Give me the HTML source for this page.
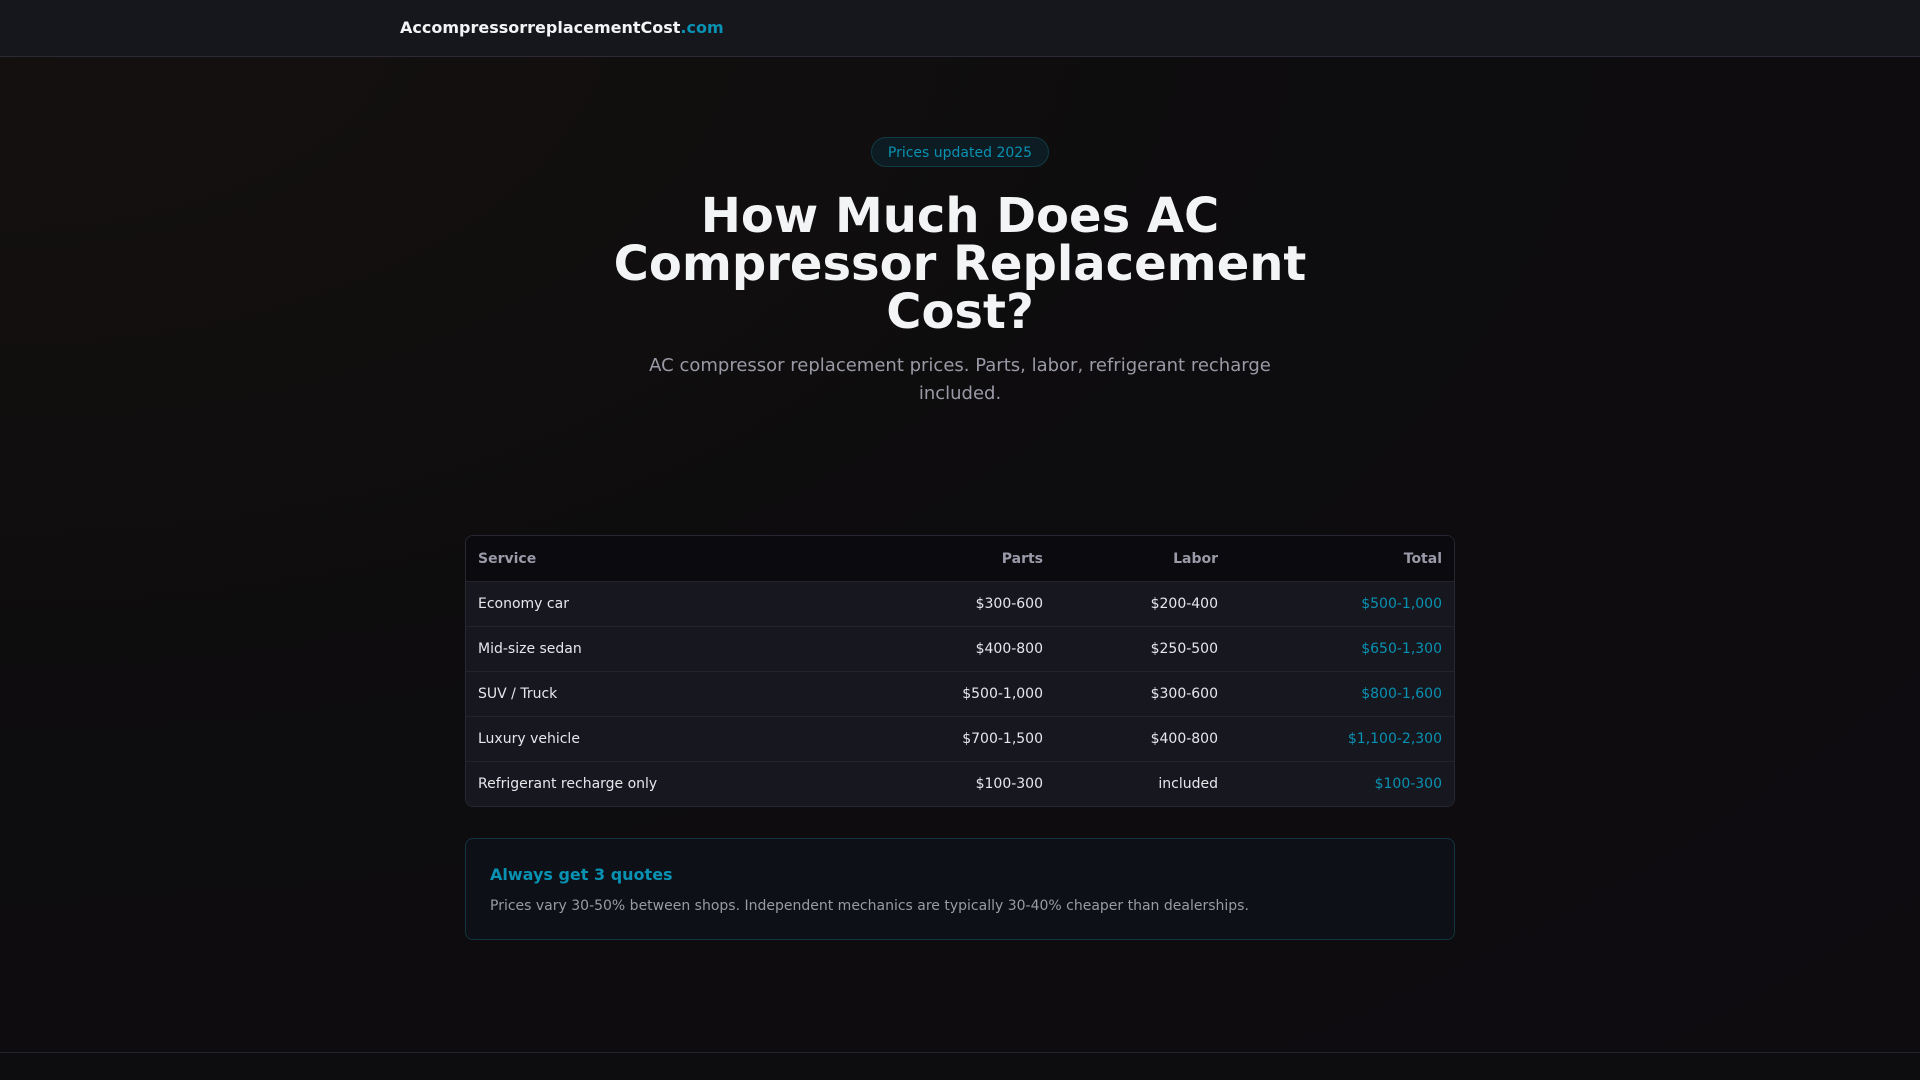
<!DOCTYPE html>
<html><head><meta charset="utf-8"><style>
*{box-sizing:border-box;margin:0;padding:0}
html,body{width:1920px;height:1080px;overflow:hidden}
body{font-family:"DejaVu Sans","Liberation Sans",sans-serif;background:radial-gradient(ellipse at 0% 0%,#15110f 0%,#0d0c0e 50%,#0f0c10 100%);color:#e5e7eb;position:relative}
.nav{height:57px;background:#16171d;border-bottom:1px solid #2a2b35}
.logo{position:absolute;left:400px;top:18px;font-weight:bold;font-size:16px;color:#f3f4f6}
.logo span{color:#0891b2}
.badge{position:absolute;left:871px;top:137px;width:178px;height:30px;border:1px solid #123a44;background:#0c1c22;border-radius:15px;color:#0891b2;font-size:14px;text-align:center;line-height:30px}
h1{position:absolute;left:560px;width:800px;top:192px;text-align:center;font-size:48px;line-height:48px;font-weight:bold;color:#f3f4f6}
.sub{position:absolute;left:620px;width:680px;top:352px;text-align:center;font-size:18px;line-height:28px;color:#9a9aa6}
table{position:absolute;left:465px;top:535px;width:990px;border-collapse:separate;border-spacing:0;border:1px solid #262730;border-radius:8px;overflow:hidden;font-size:14px;table-layout:fixed}
td,th{height:45px;padding:0 12px;text-align:right;border-top:1px solid #22232b}
th{background:#0b0b0f;color:#9a9aa8;font-weight:bold;border-top:none}
td{background:#17181f;color:#e5e7eb}
td:first-child,th:first-child{text-align:left}
td:last-child{color:#0891b2}
.call{position:absolute;left:465px;top:838px;width:990px;height:102px;border:1px solid #123540;border-radius:8px;background:#0d1016;padding:26px 24px}
.call b{display:block;color:#0891b2;font-size:16px;margin-bottom:14px}
.call p{color:#9a9aa6;font-size:14px}
.foot{position:absolute;left:0;top:1052px;width:1920px;border-top:1px solid #24242c;height:28px;background:#0d0c0e}
</style></head><body>
<div class="nav"></div>
<div class="logo">AccompressorreplacementCost<span>.com</span></div>
<div class="badge">Prices updated 2025</div>
<h1>How Much Does AC Compressor Replacement Cost?</h1>
<div class="sub">AC compressor replacement prices. Parts, labor, refrigerant recharge included.</div>
<table>
<colgroup><col style="width:422px"><col style="width:167px"><col style="width:175px"><col style="width:224px"></colgroup>
<tr><th>Service</th><th>Parts</th><th>Labor</th><th>Total</th></tr>
<tr><td>Economy car</td><td>$300-600</td><td>$200-400</td><td>$500-1,000</td></tr>
<tr><td>Mid-size sedan</td><td>$400-800</td><td>$250-500</td><td>$650-1,300</td></tr>
<tr><td>SUV / Truck</td><td>$500-1,000</td><td>$300-600</td><td>$800-1,600</td></tr>
<tr><td>Luxury vehicle</td><td>$700-1,500</td><td>$400-800</td><td>$1,100-2,300</td></tr>
<tr><td>Refrigerant recharge only</td><td>$100-300</td><td>included</td><td>$100-300</td></tr>
</table>
<div class="call"><b>Always get 3 quotes</b><p>Prices vary 30-50% between shops. Independent mechanics are typically 30-40% cheaper than dealerships.</p></div>
<div class="foot"></div>
</body></html>
